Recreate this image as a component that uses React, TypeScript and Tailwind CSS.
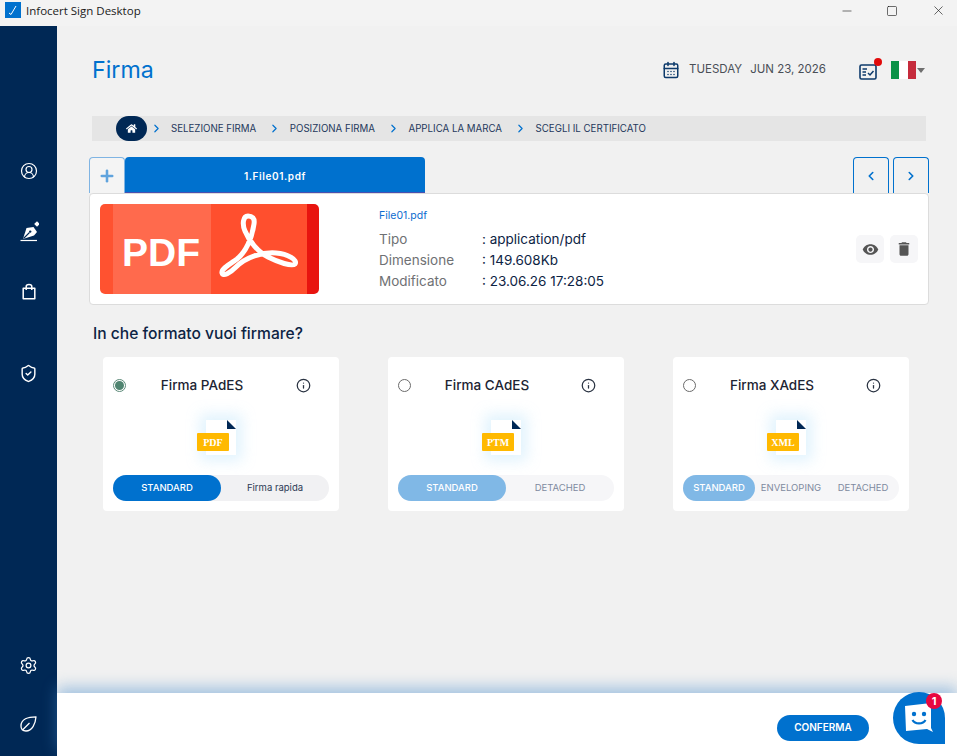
import React from "react";
import { ChevronLeft, ChevronRight, Info, Minus, Plus, Settings, ShieldCheck, Square, X, CircleUserRound, CalendarDays } from "lucide-react";
import { FaHome } from "react-icons/fa";
import { MdDelete, MdVisibility } from "react-icons/md";

const font = { fontFamily: '"Inter", "Liberation Sans", sans-serif' };

const SignPen = () => (
  <svg width="20" height="22" viewBox="0 0 20 22" fill="none">
    <path d="M4 18 L7.5 7 L14.5 6 L18 11 L15 14.5 Z" fill="#fff" />
    <path d="M4.5 17.5 L10.5 11.5" stroke="#002855" strokeWidth="1.1" />
    <circle cx="11.2" cy="10.6" r="1.2" fill="#002855" />
    <path d="M1.5 19.5 H18" stroke="#fff" strokeWidth="1.2" />
    <rect x="16" y="1" width="4" height="4" transform="rotate(45 18 3)" fill="#fff" />
  </svg>
);

const Bag = () => (
  <svg width="14" height="17" viewBox="0 0 14 17" fill="none" stroke="#fff" strokeWidth="1.5">
    <path d="M1.2 5.2 H12.8 V15.8 H1.2 Z" strokeLinejoin="round" />
    <path d="M4.2 7 V3.5 C4.2 0.8 9.8 0.8 9.8 3.5 V7" />
  </svg>
);

const LeafIcon = () => (
  <svg width="17" height="16" viewBox="0 0 17 16" fill="none" stroke="#fff" strokeWidth="1.3">
    <path d="M16 0.8 C8 0.8 1 3 1 10 C1 13 3 15 6 15 C12 15 15.5 8 16 0.8 Z" strokeLinejoin="round" />
    <path d="M2.5 14 L9.5 7" />
  </svg>
);

const FlagIt = () => (
  <div className="flex h-[18px] w-[25px]">
    <div className="flex-1 bg-[#0b9247]" />
    <div className="flex-1 bg-white" />
    <div className="flex-1 bg-[#c62b3c]" />
  </div>
);

const PdfBanner = () => (
  <div className="flex h-[90px] w-[219px] overflow-hidden rounded-[5px]">
    <div className="w-[13px] bg-[#ff5230]" />
    <div className="flex w-[98px] items-center justify-center bg-[#ff6a4d] pr-[2px] pt-[8px]">
      <span className="text-[39px] font-bold text-white" style={{ fontFamily: '"Liberation Sans", sans-serif' }}>PDF</span>
    </div>
    <div className="w-[96px] bg-[#ff4f2e]">
      <svg width="96" height="90" viewBox="1 0 96 90" fill="none">
        <path
          d="M44 20 C45 14 42 12 38 12 C33 12 32 20 35 27 C39 37 48 48 58 53 C68 58 82 63 85 60 C88 56 78 50 66 49 C52 48 36 53 26 63 C20 69 13 73 12 69 C11 65 20 60 27 55 C36 48 42 34 44 20 Z"
          stroke="#fff"
          strokeWidth="5"
          strokeLinejoin="round"
        />
      </svg>
    </div>
    <div className="flex-1 bg-[#e8140f]" />
  </div>
);

const FileIcon = ({ label }: { label: string }) => (
  <div className="relative h-[35px] w-[39px]">
    <div className="absolute left-[9px] top-0 h-[35px] w-[30px] bg-white shadow-[0_0_14px_6px_rgba(170,220,248,0.35)]" />
    <svg className="absolute left-[30px] top-0" width="9" height="9" viewBox="0 0 9 9">
      <path d="M0 0 L9 9 H0 Z" fill="#002855" />
    </svg>
    <div
      className="absolute left-0 top-[13px] flex h-[18px] w-[32px] items-center justify-center rounded-[1px] bg-[#ffb900] text-[10px] font-bold text-white"
      style={{ fontFamily: '"Liberation Serif", serif' }}
    >
      {label}
    </div>
  </div>
);

interface FormatCardProps {
  title: string;
  label: string;
  selected?: boolean;
  options: { text: string; width: string }[];
}

const FormatCard = ({ title, label, selected, options }: FormatCardProps) => (
  <div className="flex h-[154px] w-[236px] flex-col rounded-[4px] bg-white px-[10px] pt-[20px]">
    <div className="flex h-[16px] items-center">
      {selected ? (
        <div className="flex h-[13px] w-[13px] items-center justify-center rounded-full border border-[#5c8a78]">
          <div className="h-[9px] w-[9px] rounded-full bg-[#4f8470]" />
        </div>
      ) : (
        <div className="h-[13px] w-[13px] rounded-full border border-[#6b6b6b]" />
      )}
      <div className="flex-1 pr-[18px] text-center text-[13.5px] font-medium text-[#1d2433]">{title}</div>
      <Info size={15} strokeWidth={2} className="mr-[18px] text-[#2a3342]" />
    </div>
    <div className="mt-[27px] flex justify-center pr-[9px]">
      <FileIcon label={label} />
    </div>
    <div className={`mt-[20px] flex h-[26px] rounded-full ${selected ? "bg-[#f1f1f3]" : "bg-[#f6f6f8]"}`}>
      {options.map((o, i) => (
        <div
          key={o.text}
          className={`flex items-center justify-center rounded-full text-[9.5px] ${o.width} ${
            i === 0
              ? selected
                ? "bg-[#0071ce] font-medium text-white"
                : "bg-[#80b8e6] font-medium text-white"
              : selected
                ? "text-[#2b3a55]"
                : "text-[#808a9f]"
          }`}
        >
          {o.text}
        </div>
      ))}
    </div>
  </div>
);

const steps = ["SELEZIONE FIRMA", "POSIZIONA FIRMA", "APPLICA LA MARCA", "SCEGLI IL CERTIFICATO"];

export default function App() {
  return (
    <div className="relative flex h-[756px] w-[957px] flex-col overflow-hidden bg-[#f1f1f1]" style={font}>
      {/* Title bar */}
      <div className="flex h-[26px] items-start bg-[#f3f3f3] pl-[5px] pt-[2px]">
        <div className="flex h-[16px] w-[16px] items-center justify-center bg-[#0071ce]">
          <svg width="10" height="10" viewBox="0 0 10 10" fill="none">
            <path d="M1 8 L3 9.5 L8 1" stroke="#fff" strokeWidth="1" />
          </svg>
        </div>
        <span className="ml-[5px] mt-[1px] text-[11.5px] leading-[16px] text-[#1a1a1a]" style={{ fontFamily: '"Open Sans", sans-serif' }}>
          Infocert Sign Desktop
        </span>
        <div className="ml-auto mt-[1px] flex items-center text-[#111]">
          <Minus size={14} strokeWidth={1} className="mr-[32px]" />
          <Square size={12} strokeWidth={1.2} className="mr-[33px]" />
          <X size={15} strokeWidth={1} className="mr-[11px]" />
        </div>
      </div>

      <div className="flex flex-1">
        {/* Sidebar */}
        <div className="flex w-[57px] flex-col items-center bg-[#002855] pt-[136px] pb-[24px] text-white">
          <CircleUserRound size={18} strokeWidth={1.6} />
          <div className="mt-[41px] pl-[1px]"><SignPen /></div>
          <div className="mt-[40px]"><Bag /></div>
          <ShieldCheck size={19} strokeWidth={1.8} className="mt-[64px]" />
          <Settings size={19} strokeWidth={1.6} className="mt-auto" />
          <div className="mt-[41px]"><LeafIcon /></div>
        </div>

        <div className="flex flex-1 flex-col">
          <div className="flex-1 pl-[32px] pr-[28px]">
            {/* Header */}
            <div className="flex h-[90px] items-center pb-[2px] pl-[3px]">
              <h1 className="text-[23.2px] text-[#0071ce]">Firma</h1>
              <CalendarDays size={18} strokeWidth={2} className="ml-auto text-[#0d3a6b]" />
              <span className="ml-[9px] text-[11.5px] text-[#4a4f57]">TUESDAY</span>
              <span className="ml-[8px] text-[11.5px] text-[#4a4f57]">JUN 23, 2026</span>
              <div className="relative ml-[33px]">
                <svg width="18" height="17" viewBox="0 0 18 17" fill="none" className="mt-[2px]">
                  <rect x="1" y="2" width="16" height="14" rx="1.5" stroke="#0d3a6b" strokeWidth="1.6" />
                  <path d="M3.5 6 H8 M3.5 9 H7 M3.5 12 H7" stroke="#0d3a6b" strokeWidth="1.3" />
                  <path d="M9 10 L11 12 L14.5 8" stroke="#0d3a6b" strokeWidth="1.5" />
                </svg>
                <div className="absolute -right-[5px] -top-[3px] h-[8px] w-[8px] rounded-full bg-[#e10a0a]" />
              </div>
              <div className="ml-[14px]"><FlagIt /></div>
              <div className="ml-[1px] mr-[4px] h-0 w-0 border-x-[4.5px] border-t-[5px] border-x-transparent border-t-[#6f6f6f]" />
            </div>

            {/* Breadcrumb */}
            <div className="ml-[3px] flex h-[25px] w-[834px] items-center bg-[#e5e5e5] pl-[24px] text-[9.7px] text-[#24385c]">
              <div className="flex h-[25px] w-[31px] items-center justify-center rounded-full bg-[#002855]">
                <FaHome size={11} className="text-white" />
              </div>
              {steps.map((s, i) => (
                <div key={s} className="flex items-center">
                  <ChevronRight size={13} strokeWidth={2.2} className={`text-[#0071ce] ${i === 0 ? "ml-[3px] mr-[8px]" : "ml-[12px] mr-[8.5px]"}`} />
                  <span className="pt-[1px]">{s}</span>
                </div>
              ))}
            </div>

            {/* Tabs */}
            <div className="mt-[16px] flex h-[36px]">
              <div className="flex w-[36px] items-center justify-center rounded-t-[4px] border border-b-0 border-[#7fb4e3] bg-[#f4f4f4]">
                <Plus size={18} strokeWidth={3.4} className="text-[#5fa3dd]" />
              </div>
              <div className="flex w-[300px] items-center justify-center rounded-t-[4px] border-b border-[#4a4fb0] bg-[#0071ce] pt-[3px] text-[10px] font-semibold tracking-[0.6px] text-white">
                1.File01.pdf
              </div>
              <div className="ml-auto flex w-[36px] items-center justify-center rounded-t-[4px] border border-b-0 border-[#0071ce]">
                <ChevronLeft size={14} strokeWidth={2.8} className="text-[#0071ce]" />
              </div>
              <div className="ml-[4px] flex w-[36px] items-center justify-center rounded-t-[4px] border border-b-0 border-[#0071ce]">
                <ChevronRight size={14} strokeWidth={2.8} className="text-[#0071ce]" />
              </div>
            </div>

            {/* File card */}
            <div className="flex h-[112px] w-[840px] items-center rounded-[4px] border border-[#dcdcdc] bg-white pl-[10px] pr-[10px]">
              <PdfBanner />
              <div className="ml-[60px] pb-[1px] text-[13.5px] leading-[21px]">
                <div className="mb-[3px] text-[10.5px] text-[#0d6ccf]">File01.pdf</div>
                <div className="flex"><span className="w-[103px] text-[#6f7174]">Tipo</span><span className="text-[#0d2444]">: application/pdf</span></div>
                <div className="flex"><span className="w-[103px] text-[#6f7174]">Dimensione</span><span className="text-[#0d2444]">: 149.608Kb</span></div>
                <div className="flex"><span className="w-[103px] text-[#6f7174]">Modificato</span><span className="text-[#0d2444]">: 23.06.26 17:28:05</span></div>
              </div>
              <div className="ml-auto flex gap-[6px]">
                <div className="flex h-[28px] w-[28px] items-center justify-center rounded-[5px] bg-[#f6f6f8]">
                  <MdVisibility size={17} className="text-[#555]" />
                </div>
                <div className="flex h-[28px] w-[28px] items-center justify-center rounded-[5px] bg-[#f6f6f8]">
                  <MdDelete size={18} className="text-[#555]" />
                </div>
              </div>
            </div>

            <h2 className="ml-[4px] mt-[20px] text-[15.6px] font-medium leading-[18px] text-[#0d2444]">In che formato vuoi firmare?</h2>

            <div className="ml-[14px] mt-[14px] flex gap-[49px]">
              <FormatCard
                title="Firma PAdES"
                label="PDF"
                selected
                options={[{ text: "STANDARD", width: "w-[108px]" }, { text: "Firma rapida", width: "w-[108px]" }]}
              />
              <FormatCard
                title="Firma CAdES"
                label="PTM"
                options={[{ text: "STANDARD", width: "w-[108px]" }, { text: "DETACHED", width: "w-[108px]" }]}
              />
              <FormatCard
                title="Firma XAdES"
                label="XML"
                options={[{ text: "STANDARD", width: "w-[72px]" }, { text: "ENVELOPING", width: "w-[72px]" }, { text: "DETACHED", width: "w-[72px]" }]}
              />
            </div>
          </div>

          {/* Footer */}
          <div className="flex h-[63px] items-center bg-white pr-[88px] pt-[6px] shadow-[0_-6px_14px_rgba(70,140,205,0.45)]">
            <button className="ml-auto h-[26px] w-[92px] rounded-full bg-[#0071ce] text-[10px] font-semibold text-white">CONFERMA</button>
          </div>
        </div>
      </div>

      {/* Chat bubble */}
      <div className="absolute bottom-[12px] right-[12px] flex h-[52px] w-[52px] items-center justify-center rounded-t-full rounded-bl-full bg-[#0071ce]">
        <svg width="30" height="32" viewBox="0 0 30 32">
          <path d="M1 4 L27 1 V26 L29 30 L23 27 L2 29 Z" fill="#fff" />
          <circle cx="10" cy="12" r="2.2" fill="#0071ce" />
          <circle cx="20" cy="12" r="2.2" fill="#0071ce" />
          <path d="M8.5 18 C11 22.5 19 22.5 21.5 18" stroke="#0071ce" strokeWidth="2.2" fill="none" />
        </svg>
        <div className="absolute right-[3px] top-[1px] flex h-[16px] w-[16px] items-center justify-center rounded-full bg-[#e8073f] text-[11px] font-bold text-white">
          1
        </div>
      </div>
    </div>
  );
}
